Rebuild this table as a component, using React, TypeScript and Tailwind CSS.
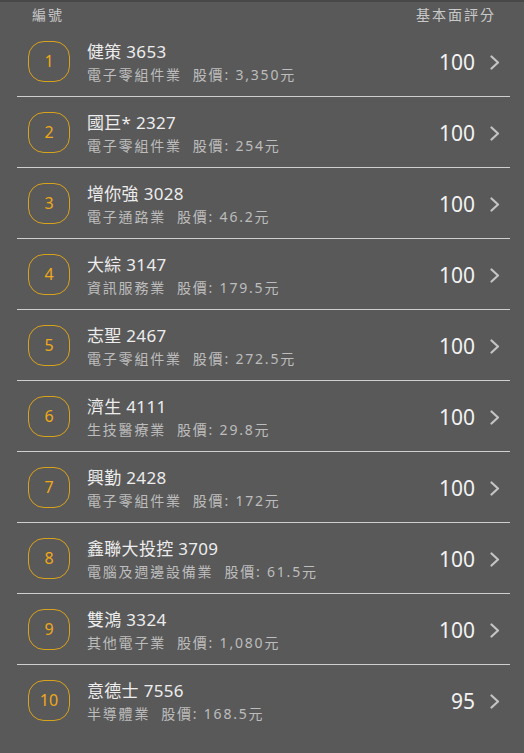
const rows = [
  { no: 1, name: '健策', code: '3653', industry: '電子零組件業', price: '3,350', score: 100 },
  { no: 2, name: '國巨*', code: '2327', industry: '電子零組件業', price: '254', score: 100 },
  { no: 3, name: '增你強', code: '3028', industry: '電子通路業', price: '46.2', score: 100 },
  { no: 4, name: '大綜', code: '3147', industry: '資訊服務業', price: '179.5', score: 100 },
  { no: 5, name: '志聖', code: '2467', industry: '電子零組件業', price: '272.5', score: 100 },
  { no: 6, name: '濟生', code: '4111', industry: '生技醫療業', price: '29.8', score: 100 },
  { no: 7, name: '興勤', code: '2428', industry: '電子零組件業', price: '172', score: 100 },
  { no: 8, name: '鑫聯大投控', code: '3709', industry: '電腦及週邊設備業', price: '61.5', score: 100 },
  { no: 9, name: '雙鴻', code: '3324', industry: '其他電子業', price: '1,080', score: 100 },
  { no: 10, name: '意德士', code: '7556', industry: '半導體業', price: '168.5', score: 95 },
];

function Chevron() {
  return (
    <svg width="12" height="15" viewBox="0 0 12 15" fill="none" className="shrink-0 mt-[2px]">
      <path d="M2.5 1.5 L9 7.5 L2.5 13.5" stroke="#c4c4c4" strokeWidth="2.2" strokeLinecap="round" strokeLinejoin="round" />
    </svg>
  );
}

export default function App() {
  return (
    <div
      className="w-[524px] h-[753px] bg-[#595959] border-t-2 border-[#484848] overflow-hidden"
      style={{ fontFamily: '"Noto Sans", "Noto Sans CJK TC", sans-serif' }}
    >
      <div className="h-[24px] flex items-center justify-between pl-[32px] pr-[28px] text-[14px] tracking-[2px] text-[#c9c9c9]">
        <span>編號</span>
        <span>基本面評分</span>
      </div>

      <div>
        {rows.map((r, i) => (
          <div key={r.no}>
            <div className="h-[70px] flex items-center pl-[28px] pr-[23px]">
              <div className="w-[42px] h-[41px] rounded-[16px] border border-[#d9a21b] flex items-center justify-center text-[#f0a818] text-[16px] shrink-0">
                {r.no}
              </div>
              <div className="ml-[17px] flex-1 min-w-0 mt-[3px]">
                <div className="text-[17px] leading-[22px] tracking-[0.3px] text-[#ededed]">
                  {r.name} {r.code}
                </div>
                <div className="text-[14px] leading-[20px] mt-[2px] tracking-[1.8px] text-[#bdbdbd]">
                  {r.industry}
                  <span className="ml-[11px]">股價: {r.price}元</span>
                </div>
              </div>
              <span className="text-[21px] text-[#f2f2f2] mr-[14px] mt-[3px]">{r.score}</span>
              <Chevron />
            </div>
            {i < rows.length - 1 && <div className="ml-[17px] mr-[14px] h-px bg-[#cfcfcf]" />}
          </div>
        ))}
      </div>
    </div>
  );
}
